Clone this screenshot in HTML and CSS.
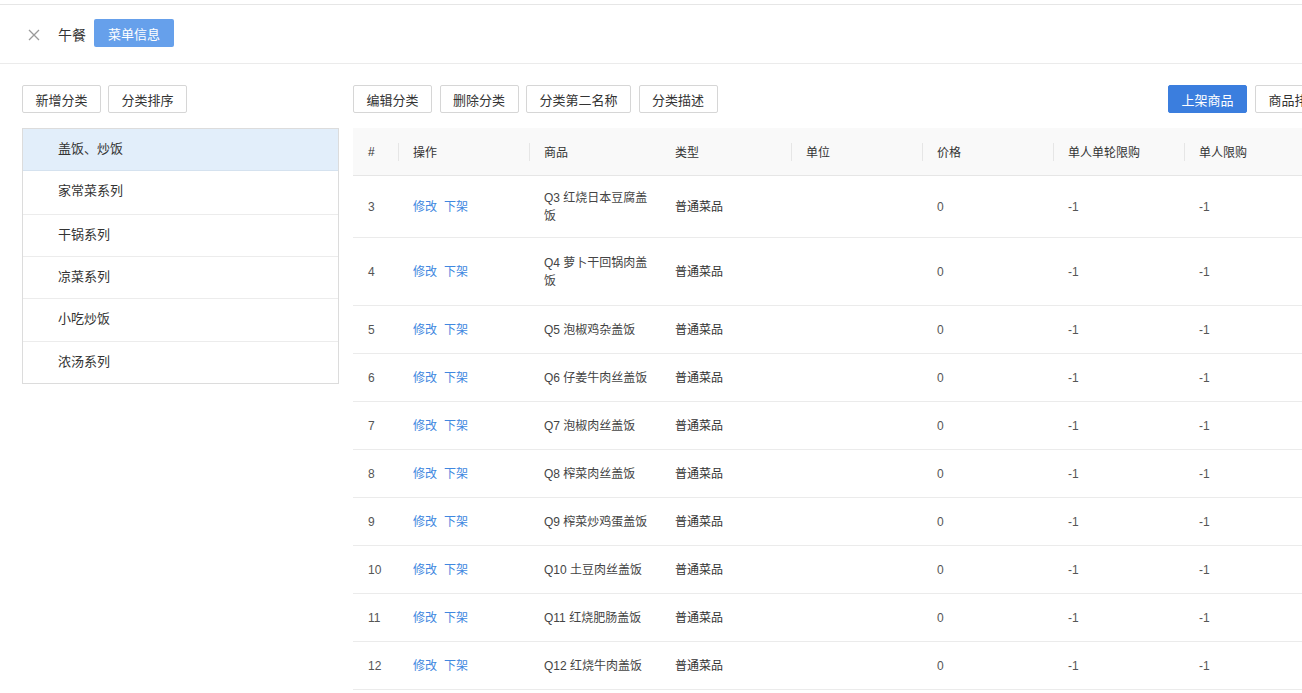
FILE: index.html
```html
<!DOCTYPE html>
<html lang="zh">
<head>
<meta charset="utf-8">
<title>菜单信息</title>
<link rel="stylesheet" href="styles.css">
</head>
<body>
<div class="page">
  <header class="topbar">
    <span class="close">
      <svg width="12" height="12" viewBox="0 0 12 12"><path d="M1 1 L11 11 M11 1 L1 11" stroke="#9a9a9a" stroke-width="1.3" fill="none"/></svg>
    </span>
    <span class="meal">午餐</span>
    <span class="tab-btn">菜单信息</span>
  </header>
  <main class="main">
    <aside class="left">
      <div class="toolbar">
        <button class="btn">新增分类</button>
        <button class="btn">分类排序</button>
      </div>
      <ul class="cat-list">
        <li class="cat active">盖饭、炒饭</li>
        <li class="cat">家常菜系列</li>
        <li class="cat">干锅系列</li>
        <li class="cat">凉菜系列</li>
        <li class="cat">小吃炒饭</li>
        <li class="cat">浓汤系列</li>
      </ul>
    </aside>
    <section class="right">
      <div class="toolbar">
        <div class="group">
          <button class="btn">编辑分类</button>
          <button class="btn">删除分类</button>
          <button class="btn">分类第二名称</button>
          <button class="btn">分类描述</button>
        </div>
        <div class="group end">
          <button class="btn primary">上架商品</button>
          <button class="btn">商品排序</button>
        </div>
      </div>
      <table class="grid">
        <colgroup>
          <col class="c-num"><col class="c"><col class="c"><col class="c"><col class="c"><col class="c"><col class="c"><col class="c"><col class="c">
        </colgroup>
        <thead>
          <tr>
            <th>#</th><th class="sep">操作</th><th class="sep">商品</th><th>类型</th><th class="sep">单位</th><th class="sep">价格</th><th class="sep">单人单轮限购</th><th class="sep">单人限购</th><th class="sep">状态</th>
          </tr>
        </thead>
        <tbody>
          <tr class="r2a"><td>3</td><td><a>修改</a><a>下架</a></td><td class="prod">Q3 红烧日本豆腐盖饭</td><td class="dark">普通菜品</td><td></td><td>0</td><td>-1</td><td>-1</td><td></td></tr>
          <tr class="r2b"><td>4</td><td><a>修改</a><a>下架</a></td><td class="prod">Q4 萝卜干回锅肉盖饭</td><td class="dark">普通菜品</td><td></td><td>0</td><td>-1</td><td>-1</td><td></td></tr>
          <tr><td>5</td><td><a>修改</a><a>下架</a></td><td class="prod">Q5 泡椒鸡杂盖饭</td><td class="dark">普通菜品</td><td></td><td>0</td><td>-1</td><td>-1</td><td></td></tr>
          <tr><td>6</td><td><a>修改</a><a>下架</a></td><td class="prod">Q6 仔姜牛肉丝盖饭</td><td class="dark">普通菜品</td><td></td><td>0</td><td>-1</td><td>-1</td><td></td></tr>
          <tr><td>7</td><td><a>修改</a><a>下架</a></td><td class="prod">Q7 泡椒肉丝盖饭</td><td class="dark">普通菜品</td><td></td><td>0</td><td>-1</td><td>-1</td><td></td></tr>
          <tr><td>8</td><td><a>修改</a><a>下架</a></td><td class="prod">Q8 榨菜肉丝盖饭</td><td class="dark">普通菜品</td><td></td><td>0</td><td>-1</td><td>-1</td><td></td></tr>
          <tr><td>9</td><td><a>修改</a><a>下架</a></td><td class="prod">Q9 榨菜炒鸡蛋盖饭</td><td class="dark">普通菜品</td><td></td><td>0</td><td>-1</td><td>-1</td><td></td></tr>
          <tr><td>10</td><td><a>修改</a><a>下架</a></td><td class="prod">Q10 土豆肉丝盖饭</td><td class="dark">普通菜品</td><td></td><td>0</td><td>-1</td><td>-1</td><td></td></tr>
          <tr><td>11</td><td><a>修改</a><a>下架</a></td><td class="prod">Q11 红烧肥肠盖饭</td><td class="dark">普通菜品</td><td></td><td>0</td><td>-1</td><td>-1</td><td></td></tr>
          <tr><td>12</td><td><a>修改</a><a>下架</a></td><td class="prod">Q12 红烧牛肉盖饭</td><td class="dark">普通菜品</td><td></td><td>0</td><td>-1</td><td>-1</td><td></td></tr>
        </tbody>
      </table>
    </section>
  </main>
</div>
</body>
</html>
```

FILE: styles.css
```css
html, body {
  margin: 0;
  padding: 0;
  overflow: hidden;
  background: #fff;
}
body {
  font-family: "Liberation Sans", "Noto Sans CJK SC", sans-serif;
  font-size: 12px;
  color: #333;
}
.page {
  padding-top: 4px;
  width: 1302px;
}
.topbar {
  display: flex;
  align-items: center;
  height: 58px;
  border-top: 1px solid #e6e6e6;
  border-bottom: 1px solid #ebebeb;
  padding-left: 28px;
}
.close {
  display: flex;
  width: 12px;
  height: 12px;
  margin-right: 18px;
  margin-top: 1px;
}
.meal {
  font-size: 14px;
  color: #333;
  margin-right: 8px;
}
.tab-btn {
  display: inline-flex;
  align-items: center;
  height: 28px;
  padding: 0 14px;
  font-size: 13px;
  color: #fff;
  background: #66a0eb;
  border-radius: 2px;
  margin-top: -2px;
}
.main {
  display: flex;
  padding: 21px 0 0 22px;
  gap: 14px;
}
.left {
  flex: 0 0 317px;
  min-width: 0;
}
.toolbar {
  display: flex;
  gap: 7px;
  height: 28px;
  margin-bottom: 15px;
}
.group {
  display: flex;
  gap: 7.5px;
}
.group.end {
  margin-left: auto;
  gap: 8px;
}
.btn {
  height: 28px;
  padding: 0 12.5px;
  font-family: "Liberation Sans", "Noto Sans CJK SC", sans-serif;
  font-size: 13px;
  color: #333;
  background: #fff;
  border: 1px solid #d6d6d6;
  border-radius: 2px;
  white-space: nowrap;
}
.btn.primary {
  background: #3b7ede;
  border-color: #3b7ede;
  color: #fff;
}
.cat-list {
  list-style: none;
  margin: 0;
  padding: 0;
  border: 1px solid #dcdcdc;
}
.cat {
  height: 42.33px;
  line-height: 40px;
  padding-left: 35px;
  font-size: 13px;
  color: #333;
  border-top: 1px solid #ececec;
  box-sizing: border-box;
}
.cat:first-child {
  border-top: 0;
}
.cat.active {
  background: #e2eefa;
  border-bottom: 1px solid #d5e2ef;
}
.cat.active + .cat {
  border-top: 0;
}
.right {
  flex: 0 0 981px;
  min-width: 0;
}
.grid {
  table-layout: fixed;
  border-collapse: collapse;
  width: 1093px;
}
.c-num { width: 45px; }
.c { width: 131px; }
.grid th {
  position: relative;
  height: 47px;
  background: #f9f9f9;
  border-bottom: 1px solid #e6e6e6;
  text-align: left;
  font-weight: normal;
  color: #333;
  padding: 0 15px;
}
.grid th.sep::before {
  content: "";
  position: absolute;
  left: 0;
  top: 15px;
  height: 18px;
  width: 1px;
  background: #e6e6e6;
}
.grid td {
  height: 47px;
  padding: 0 15px;
  border-bottom: 1px solid #ebebeb;
  color: #555;
  line-height: 18px;
  vertical-align: middle;
}
.grid tr.r2a td { height: 61px; }
.grid tr.r2b td { height: 67px; }
.grid td.dark { color: #333; }
.grid td.prod { color: #444; padding-right: 10px; }
.grid a {
  color: #4087e0;
  margin-right: 7px;
}
```
